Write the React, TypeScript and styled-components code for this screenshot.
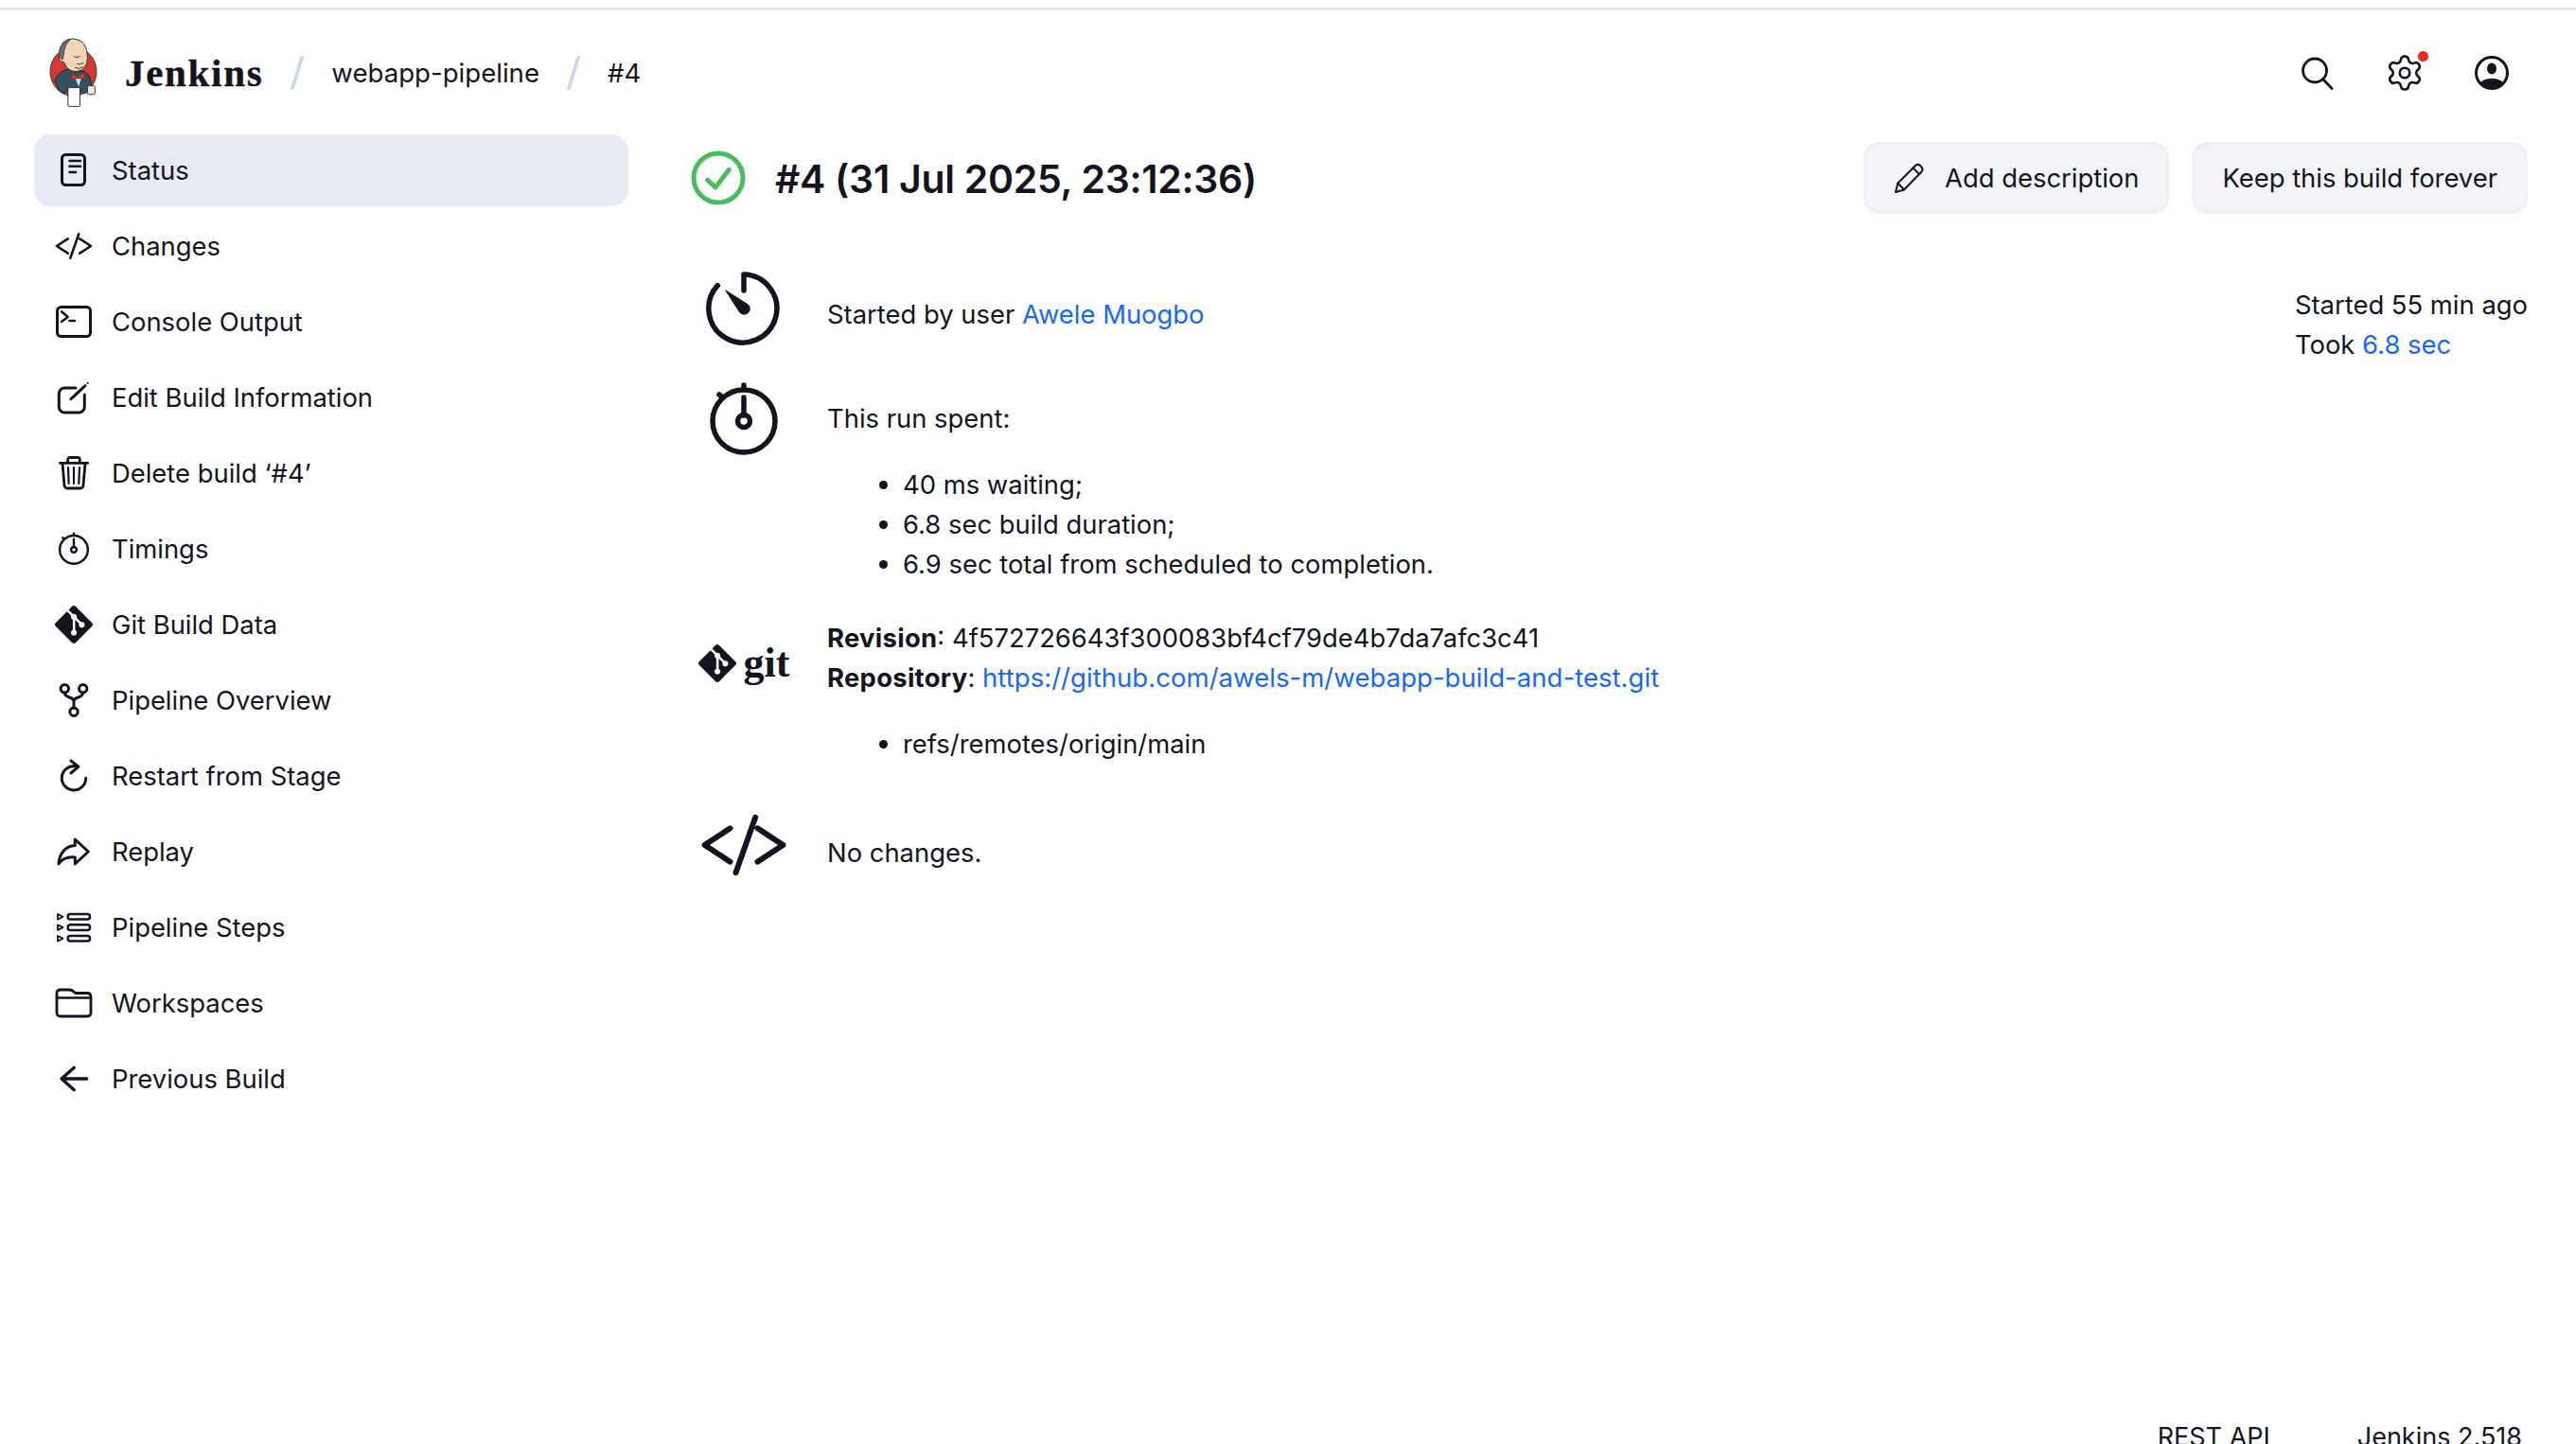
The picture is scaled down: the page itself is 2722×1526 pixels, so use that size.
import React from 'react';
import styled, { createGlobalStyle } from 'styled-components';
import { Settings } from 'lucide-react';
import { SiGit } from 'react-icons/si';

const GlobalStyle = createGlobalStyle`
    html, body {
        margin: 0;
        padding: 0;
        background: #fff;
    }

    body {
        font-family: Inter, "Liberation Sans", sans-serif;
        font-size: 27.4px;
        line-height: 42px;
        color: #14141f;
    }
`

const Page = styled.div`
    height: 1526px;
    overflow: hidden;
    display: flex;
    flex-direction: column;
`

const TopRule = styled.div`
    flex: none;
    margin-top: 8px;
    height: 3px;
    background: #e6e6e6;
`

const Header = styled.header`
    flex: none;
    height: 131px;
    padding: 0 43px 0 51px;
    display: flex;
    align-items: center;
`

const Brand = styled.div`
    display: flex;
    align-items: center;
    gap: 28px;
`

const BrandName = styled.span`
    font-family: "Liberation Serif", serif;
    font-weight: 700;
    font-size: 41px;
    letter-spacing: 1.7px;
    -webkit-text-stroke: 0.4px #14141f;
`

const Slash = styled.span`
    width: 4px;
    height: 36px;
    margin: 0 34px;
    border-radius: 2px;
    background: #d0d7e6;
    transform: skewX(-17deg);
`

const Crumb = styled.span`
    font-size: 27.6px;
`

const HeaderActions = styled.div`
    margin-left: auto;
    display: flex;
`

const HeaderButton = styled.div`
    position: relative;
    width: 92px;
    height: 42px;
    display: flex;
    align-items: center;
    justify-content: center;
`

const Badge = styled.span`
    position: absolute;
    top: -2px;
    right: 21px;
    width: 11px;
    height: 11px;
    border-radius: 50%;
    background: #e6291f;
`

const Body = styled.div`
    flex: none;
    height: 1362px;
    padding: 0 51px 0 36px;
    display: flex;
    gap: 65px;
`

const Sidebar = styled.nav`
    flex: none;
    width: 628px;
    display: flex;
    flex-direction: column;
    gap: 4px;
`

const SideItem = styled.a<{ $active?: boolean }>`
    height: 76px;
    box-sizing: border-box;
    padding-left: 20px;
    display: flex;
    align-items: center;
    gap: 20px;
    border-radius: 17px;
    background: ${p => (p.$active ? '#e8ebf3' : 'transparent')};
    border: 2px solid ${p => (p.$active ? '#e9ecf3' : 'transparent')};
`

const Glyph = styled.svg<{ $size?: number; $inset?: number }>`
    flex: none;
    width: ${p => p.$size ?? 40}px;
    height: ${p => p.$size ?? 40}px;
    margin: 0 ${p => p.$inset ?? 0}px;
    fill: none;
    stroke: currentColor;
    stroke-linecap: round;
    stroke-linejoin: round;
    stroke-width: 3;
`

const Main = styled.main`
    flex: 1;
    min-width: 0;
`

const TitleRow = styled.div`
    margin-top: 8px;
    height: 76px;
    display: flex;
    align-items: center;
`

const Title = styled.h1`
    margin: 2px 0 0 30px;
    font-size: 41px;
    line-height: 56px;
    font-weight: 600;
    letter-spacing: -0.3px;
`

const TitleActions = styled.div`
    margin-left: auto;
    display: flex;
    gap: 24px;
`

const Button = styled.button`
    height: 76px;
    box-sizing: border-box;
    padding: 0 29px;
    display: flex;
    align-items: center;
    gap: 22px;
    border: 3px solid #eef0f5;
    border-radius: 17px;
    background: #f3f4f8;
    font: inherit;
    color: inherit;
`

const Summary = styled.div`
    margin-top: 60px;
    display: flex;
    justify-content: space-between;
    align-items: flex-start;
`

const Aside = styled.div`
    margin-top: 15px;
`

const Row = styled.section<{ $top?: number }>`
    margin-top: ${p => p.$top ?? 0}px;
    display: grid;
    grid-template-columns: 114px 1fr;
    column-gap: 31px;
`

const IconCell = styled.div`
    display: flex;
    justify-content: center;
`

const TextCell = styled.div<{ $pad?: number }>`
    padding-top: ${p => p.$pad ?? 0}px;
`

const Line = styled.div``

const Link = styled.a`
    color: #1a68ef;
`

const RepoLink = styled(Link)`
    font-size: 27.6px;
`

const Strong = styled.strong`
    font-weight: 700;
    letter-spacing: 0.3px;
`

const BulletList = styled.ul`
    margin: 28px 0 0;
    padding-left: 80px;
`

const GitMark = styled.div`
    margin-top: 28px;
    display: flex;
    align-items: center;
    gap: 8px;
    height: 40px;
    font-family: "Liberation Serif", serif;
    font-weight: 700;
    font-size: 44px;
    line-height: 38px;
`

const Footer = styled.footer`
    flex: none;
    padding-right: 57px;
    display: flex;
    justify-content: flex-end;
    gap: 92px;
    font-size: 27px;
    line-height: 30px;
`

const Drawing = ({ size, sw, children }: { size?: number; sw?: number; children: React.ReactNode }) => (
    <Glyph $size={size} viewBox="0 0 40 40" style={sw ? { strokeWidth: sw } : undefined}>
        {children}
    </Glyph>
)

const StatusIcon = () => (
    <Drawing>
        <rect x="7.5" y="3.5" width="24" height="32" rx="4" />
        <path d="M15.5 10H27M15.5 15.7H27M15.5 22H22" strokeWidth="2.6" />
    </Drawing>
)

const CodeIcon = ({ size }: { size?: number }) => (
    <Drawing size={size} sw={2.6}>
        <path d="M13.7 12.3L2 20l11.7 7.7M26.3 12.3L38 20l-11.7 7.700M25.3 7.3l-9 25.4" />
    </Drawing>
)

const ConsoleIcon = () => (
    <Drawing>
        <rect x="2.5" y="4.5" width="35" height="31" rx="4" />
        <path d="M7 9.3l6.7 5.7L7 20M15.3 19H21" strokeWidth="2.5" />
    </Drawing>
)

const EditIcon = () => (
    <Drawing>
        <path d="M22 10H10.3a6 6 0 0 0-6 6v14a6 6 0 0 0 6 6h15a6 6 0 0 0 6-6V17" />
        <path d="M17 21.7L32 7.7" />
        <circle cx="34.7" cy="5" r="1.1" fill="currentColor" stroke="none" />
    </Drawing>
)

const TrashIcon = () => (
    <Drawing sw={2.8}>
        <path d="M5.3 9.3h29.4M13.7 9V5.500a2 2 0 0 1 2-2h8.600a2 2 0 0 1 2 2V9" />
        <path d="M8 9.500l2 23.500a3 3 0 0 0 3 3h14a3 3 0 0 0 3-3l2-23.500" />
        <path d="M14 14l.7 17M20 14v17M26 14l-.7 17" strokeWidth="2.2" />
    </Drawing>
)

const StopwatchIcon = ({ size, inset }: { size?: number; inset?: number }) => (
    <Glyph $size={size} $inset={inset} viewBox="0 0 80 80" style={{ strokeWidth: 5.5 }}>
        <circle cx="40" cy="42" r="33" />
        <circle cx="40" cy="42" r="6.5" />
        <path d="M40 17v19M40 4v4M14 14l4 3" />
    </Glyph>
)

const GitIcon = ({ size }: { size: number }) => (
    <SiGit size={size} color="#14141f" style={{ flex: 'none' }} />
)

const ForkIcon = () => (
    <Drawing>
        <circle cx="10.3" cy="7.7" r="4.2" />
        <circle cx="29.7" cy="7.7" r="4.2" />
        <circle cx="20" cy="32.3" r="4.2" />
        <path d="M10.3 12c0 6 9.7 4 9.7 9v7M29.7 12c0 6-9.7 4-9.7 9" />
    </Drawing>
)

const RestartIcon = () => (
    <Drawing>
        <path d="M22 9.8A12.7 12.7 0 1 0 32.7 22.3" />
        <path d="M17 4l8 6.2-8 6.8" />
    </Drawing>
)

const ReplayIcon = () => (
    <Drawing>
        <path d="M21.3 7l14 13-14 13v-7c-8.300-.8-13.500 1.500-17.300 7 .5-10.500 7-19 17.300-19.500z" />
    </Drawing>
)

const StepsIcon = () => (
    <Drawing sw={2.5}>
        <rect x="13.700" y="6" width="23.300" height="5.600" rx="2.500" />
        <rect x="13.700" y="17.300" width="23.300" height="5.600" rx="2.500" />
        <rect x="13.700" y="29" width="23.300" height="5.600" rx="2.500" />
        <path d="M3 6l5.500 2.800L3 11.600zM3 17.300l5.500 2.800L3 22.900zM3 29l5.500 2.800L3 34.600z" strokeWidth="1.800" />
    </Drawing>
)

const FolderIcon = () => (
    <Drawing sw={2.8}>
        <path d="M2 14v-4q0-4 4-4h9q3 0 5 2l1.500 1.500H34q4 0 4 4V30q0 4-4 4H6q-4 0-4-4z" />
        <path d="M2 14.500h36" strokeWidth="2.400" />
    </Drawing>
)

const BackIcon = () => (
    <Drawing sw={3.4}>
        <path d="M33.700 20H7M20.300 8.300L7 20l13.300 11.700" />
    </Drawing>
)

const SearchIcon = () => (
    <Drawing sw={2.8}>
        <circle cx="17" cy="17.500" r="12.500" />
        <path d="M26 27l9 9.500" />
    </Drawing>
)

const UserIcon = () => (
    <Drawing>
        <circle cx="20" cy="20" r="16.500" />
        <ellipse cx="20" cy="15.500" rx="5" ry="6" fill="currentColor" stroke="none" />
        <path d="M7.500 31Q11 26 20 26t12.500 5A16 16 0 0 1 7.500 31z" fill="currentColor" stroke="none" />
    </Drawing>
)

const PencilIcon = () => (
    <Glyph $size={32} viewBox="0 0 32 32" style={{ strokeWidth: 2 }}>
        <path d="M2 31l2.500-9.500L23 3q2.500-2.200 5 0l1.500 1.700q2 2.300 0 4.800L11 28.500z" />
        <path d="M4.500 21.500l6.500 7M20.500 5.500l6.500 6.500" />
    </Glyph>
)

const CheckIcon = () => (
    <Glyph $size={60} viewBox="0 0 60 60" style={{ strokeWidth: 5, color: '#4abc5d' }}>
        <circle cx="30" cy="30" r="26" />
        <path d="M18.700 32.300L27 40l14.300-18.700" />
    </Glyph>
)

const TimerIcon = () => (
    <Glyph $size={80} viewBox="0 0 80 80" style={{ strokeWidth: 5.500 }}>
        <path d="M40 21V4a36 36 0 1 1-27.700 11.700" />
        <path d="M21 21l23.500 15a6 6 0 1 1-8.500 8.500z" fill="currentColor" strokeWidth="1" />
    </Glyph>
)

const JenkinsLogo = () => (
    <svg width="53" height="74" viewBox="35 28 160 222" style={{ flex: 'none' }}>
        <ellipse cx="115" cy="135" rx="74" ry="78" fill="#d33833" stroke="#3a3a3a" strokeWidth="3" />
        <path d="M55 165q14-36 50-38l45 8q26 12 22 60l-22 10-15-10-35-5q-15 25-30 5z" fill="#335061" stroke="#222" strokeWidth="3" />
        <path d="M70 80q2-50 45-50 45 2 45 60 0 40-35 45-30 0-40-30-20 0-15-25z" fill="#f0d6b7" stroke="#333" strokeWidth="3" />
        <path d="M70 88q-6-42 36-56-20 18-21 48l-4 18z" fill="#6d6b6d" stroke="#333" strokeWidth="2" />
        <path d="M118 86q8 8 18 0M126 110q10 6 22-4M120 122q12 8 26-2" fill="none" stroke="#333" strokeWidth="3" />
        <path d="M108 140l22 10 22-12-2 22-20-5-20 7z" fill="#d33833" stroke="#333" strokeWidth="2" />
        <path d="M122 158l18-1-8 26z" fill="#cfe0ea" />
        <rect x="98" y="186" width="38" height="60" rx="4" fill="#fff" stroke="#333" strokeWidth="3" />
        <rect x="160" y="180" width="24" height="28" rx="6" fill="#f3ece0" stroke="#333" strokeWidth="3" />
    </svg>
)

const sideItems: { label: string; icon: React.ReactNode }[] = [
    { label: 'Status', icon: <StatusIcon /> },
    { label: 'Changes', icon: <CodeIcon /> },
    { label: 'Console Output', icon: <ConsoleIcon /> },
    { label: 'Edit Build Information', icon: <EditIcon /> },
    { label: 'Delete build ‘#4’', icon: <TrashIcon /> },
    { label: 'Timings', icon: <StopwatchIcon size={36} inset={2} /> },
    { label: 'Git Build Data', icon: <GitIcon size={40} /> },
    { label: 'Pipeline Overview', icon: <ForkIcon /> },
    { label: 'Restart from Stage', icon: <RestartIcon /> },
    { label: 'Replay', icon: <ReplayIcon /> },
    { label: 'Pipeline Steps', icon: <StepsIcon /> },
    { label: 'Workspaces', icon: <FolderIcon /> },
    { label: 'Previous Build', icon: <BackIcon /> },
]

const App = () => {
    return (
        <Page>
            <GlobalStyle />
            <TopRule />
            <Header>
                <Brand>
                    <JenkinsLogo />
                    <BrandName>Jenkins</BrandName>
                </Brand>
                <Slash />
                <Crumb>webapp-pipeline</Crumb>
                <Slash />
                <Crumb>#4</Crumb>
                <HeaderActions>
                    <HeaderButton><SearchIcon /></HeaderButton>
                    <HeaderButton>
                        <Settings size={42} strokeWidth={1.5} />
                        <Badge />
                    </HeaderButton>
                    <HeaderButton><UserIcon /></HeaderButton>
                </HeaderActions>
            </Header>
            <Body>
                <Sidebar>
                    {sideItems.map((item, i) => (
                        <SideItem key={item.label} $active={i === 0}>
                            {item.icon}
                            {item.label}
                        </SideItem>
                    ))}
                </Sidebar>
                <Main>
                    <TitleRow>
                        <CheckIcon />
                        <Title>#4 (31 Jul 2025, 23:12:36)</Title>
                        <TitleActions>
                            <Button><PencilIcon />Add description</Button>
                            <Button>Keep this build forever</Button>
                        </TitleActions>
                    </TitleRow>
                    <Summary>
                        <div>
                            <Row>
                                <IconCell><TimerIcon /></IconCell>
                                <TextCell $pad={25}>
                                    Started by user <Link>Awele Muogbo</Link>
                                </TextCell>
                            </Row>
                            <Row $top={37}>
                                <IconCell><StopwatchIcon size={80} /></IconCell>
                                <TextCell $pad={18}>
                                    <Line>This run spent:</Line>
                                    <BulletList>
                                        <li>40 ms waiting;</li>
                                        <li>6.8 sec build duration;</li>
                                        <li>6.9 sec total from scheduled to completion.</li>
                                    </BulletList>
                                </TextCell>
                            </Row>
                            <Row $top={36}>
                                <IconCell>
                                    <GitMark><GitIcon size={40} />git</GitMark>
                                </IconCell>
                                <TextCell>
                                    <Line><Strong>Revision</Strong>: 4f572726643f300083bf4cf79de4b7da7afc3c41</Line>
                                    <Line>
                                        <Strong>Repository</Strong>: <RepoLink>https://github.com/awels-m/webapp-build-and-test.git</RepoLink>
                                    </Line>
                                    <BulletList>
                                        <li>refs/remotes/origin/main</li>
                                    </BulletList>
                                </TextCell>
                            </Row>
                            <Row $top={40}>
                                <IconCell><CodeIcon size={92} /></IconCell>
                                <TextCell $pad={33}>No changes.</TextCell>
                            </Row>
                        </div>
                        <Aside>
                            <Line>Started 55 min ago</Line>
                            <Line>Took <Link>6.8 sec</Link></Line>
                        </Aside>
                    </Summary>
                </Main>
            </Body>
            <Footer>
                <span>REST API</span>
                <span>Jenkins 2.518</span>
            </Footer>
        </Page>
    )
}

export default App
